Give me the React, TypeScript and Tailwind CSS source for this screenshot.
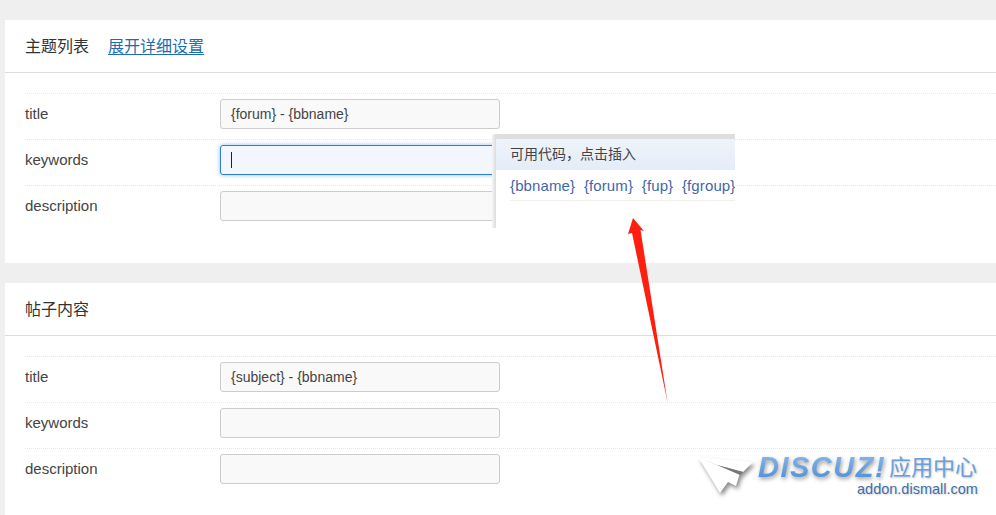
const font = { fontFamily: '"Liberation Sans","Noto Sans CJK SC",sans-serif' };

function Row({ label, value, active }: { label: string; value?: string; active?: boolean }) {
  return (
    <div className="flex h-[46px] items-start border-t border-dotted border-[#e2e8ec] pt-[5px]">
      <div className="w-[195px] pt-[5px] text-[15px] leading-[20px] text-[#444]">{label}</div>
      {active ? (
        <div className="flex h-[30px] w-[280px] items-center rounded-[3px] border border-[#2f80d8] bg-[#f3f7fd] pl-[10px] shadow-[0_0_4px_#8db9ec]">
          <div className="h-[16px] w-px bg-[#222]" />
        </div>
      ) : (
        <div className="flex h-[30px] w-[280px] items-center rounded-[3px] border border-[#ccc] bg-[#f9f9f9] pl-[10px] text-[14px] text-[#444]">
          {value}
        </div>
      )}
    </div>
  );
}

function Card({ title, link, rows, h }: any) {
  return (
    <section className={`ml-[5px] bg-white ${h}`}>
      <div className="flex h-[53px] items-center gap-[19px] border-b border-[#ddd] pl-[20px] pt-[2px] text-[16px] text-[#333]">
        <span>{title}</span>
        {link && <span className="text-[#1e6cb0] underline underline-offset-2">{link}</span>}
      </div>
      <div className="ml-[20px] pt-[20px]">
        {rows.map((r: any) => (
          <Row key={r.label} {...r} />
        ))}
      </div>
    </section>
  );
}

export default function App() {
  return (
    <div className="relative h-[515px] w-[996px] overflow-hidden bg-[#efefef]" style={font}>
      <div className="flex flex-col gap-[20px] pt-[20px]">
        <Card
          title="主题列表"
          link="展开详细设置"
          h="h-[243px]"
          rows={[
            { label: "title", value: "{forum} - {bbname}" },
            { label: "keywords", active: true },
            { label: "description", value: "" },
          ]}
        />
        <Card
          title="帖子内容"
          h="h-[232px]"
          rows={[
            { label: "title", value: "{subject} - {bbname}" },
            { label: "keywords", value: "" },
            { label: "description", value: "" },
          ]}
        />
      </div>

      <div className="absolute left-[492px] top-[134px] h-[94px] w-[243px] overflow-hidden rounded-tl-[4px] bg-white">
        <div className="h-[5px] bg-[#dedede]" />
        <div className="absolute left-0 top-0 h-full w-[4px] bg-gradient-to-r from-[#f4f4f4] to-[#dcdcdc]" />
        <div className="ml-[4px]">
          <div className="flex h-[31px] items-center bg-gradient-to-b from-[#eef4fb] to-[#e4ecf7] pl-[14px] text-[14px] text-[#444]">
            可用代码，点击插入
          </div>
          <div className="ml-[14px] flex h-[31px] items-center gap-[8.7px] whitespace-nowrap border-b border-[#f0f0f0] pt-[2px] text-[15px] tracking-[0.12px] text-[#3f67a8]">
            <span>{"{bbname}"}</span>
            <span>{"{forum}"}</span>
            <span>{"{fup}"}</span>
            <span>{"{fgroup}"}</span>
          </div>
        </div>
      </div>

      <svg className="absolute left-[620px] top-[210px]" width="60" height="200" viewBox="0 0 60 200">
        <path d="M13 8 L24 21 L20.5 20 L47.5 192 L12 23 L8 24 Z" fill="#fe1f10" />
      </svg>

      <div className="absolute left-[698px] top-[452px] h-[50px] w-[290px]">
        <svg className="absolute left-0 top-0 overflow-visible [filter:drop-shadow(2px_3px_2px_rgba(0,0,0,0.45))]" width="58" height="46" viewBox="0 0 58 46">
          <path d="M0.3 5.3 L55 10 L45 20 L19 13 Z" fill="#fff" />
          <path d="M0.3 5.3 L19 13 L42 21 L38 34 L30 30 L22 41 Z" fill="#fff" />
          <path d="M19 13 L45 20 L42 23 Z" fill="#777" />
        </svg>
        <span className="absolute left-[60px] top-[-1px] bg-gradient-to-b from-[#8dbdea] to-[#4a8ad2] bg-clip-text text-[29px] font-bold italic leading-[32px] tracking-[1.5px] text-transparent [filter:drop-shadow(1px_2px_2px_rgba(0,0,0,0.4))]">
          DISCUZ!
        </span>
        <span className="absolute left-[191px] top-[2px] text-[22px] leading-[28px] text-[#6aa0dc] [text-shadow:1px_1px_2px_rgba(0,0,0,0.25)]">
          应用中心
        </span>
        <span className="absolute left-[159px] top-[28px] text-[14.5px] leading-[18px] text-[#3f6fa8] [text-shadow:1px_1px_2px_rgba(0,0,0,0.2)]">
          addon.dismall.com
        </span>
      </div>
    </div>
  );
}
